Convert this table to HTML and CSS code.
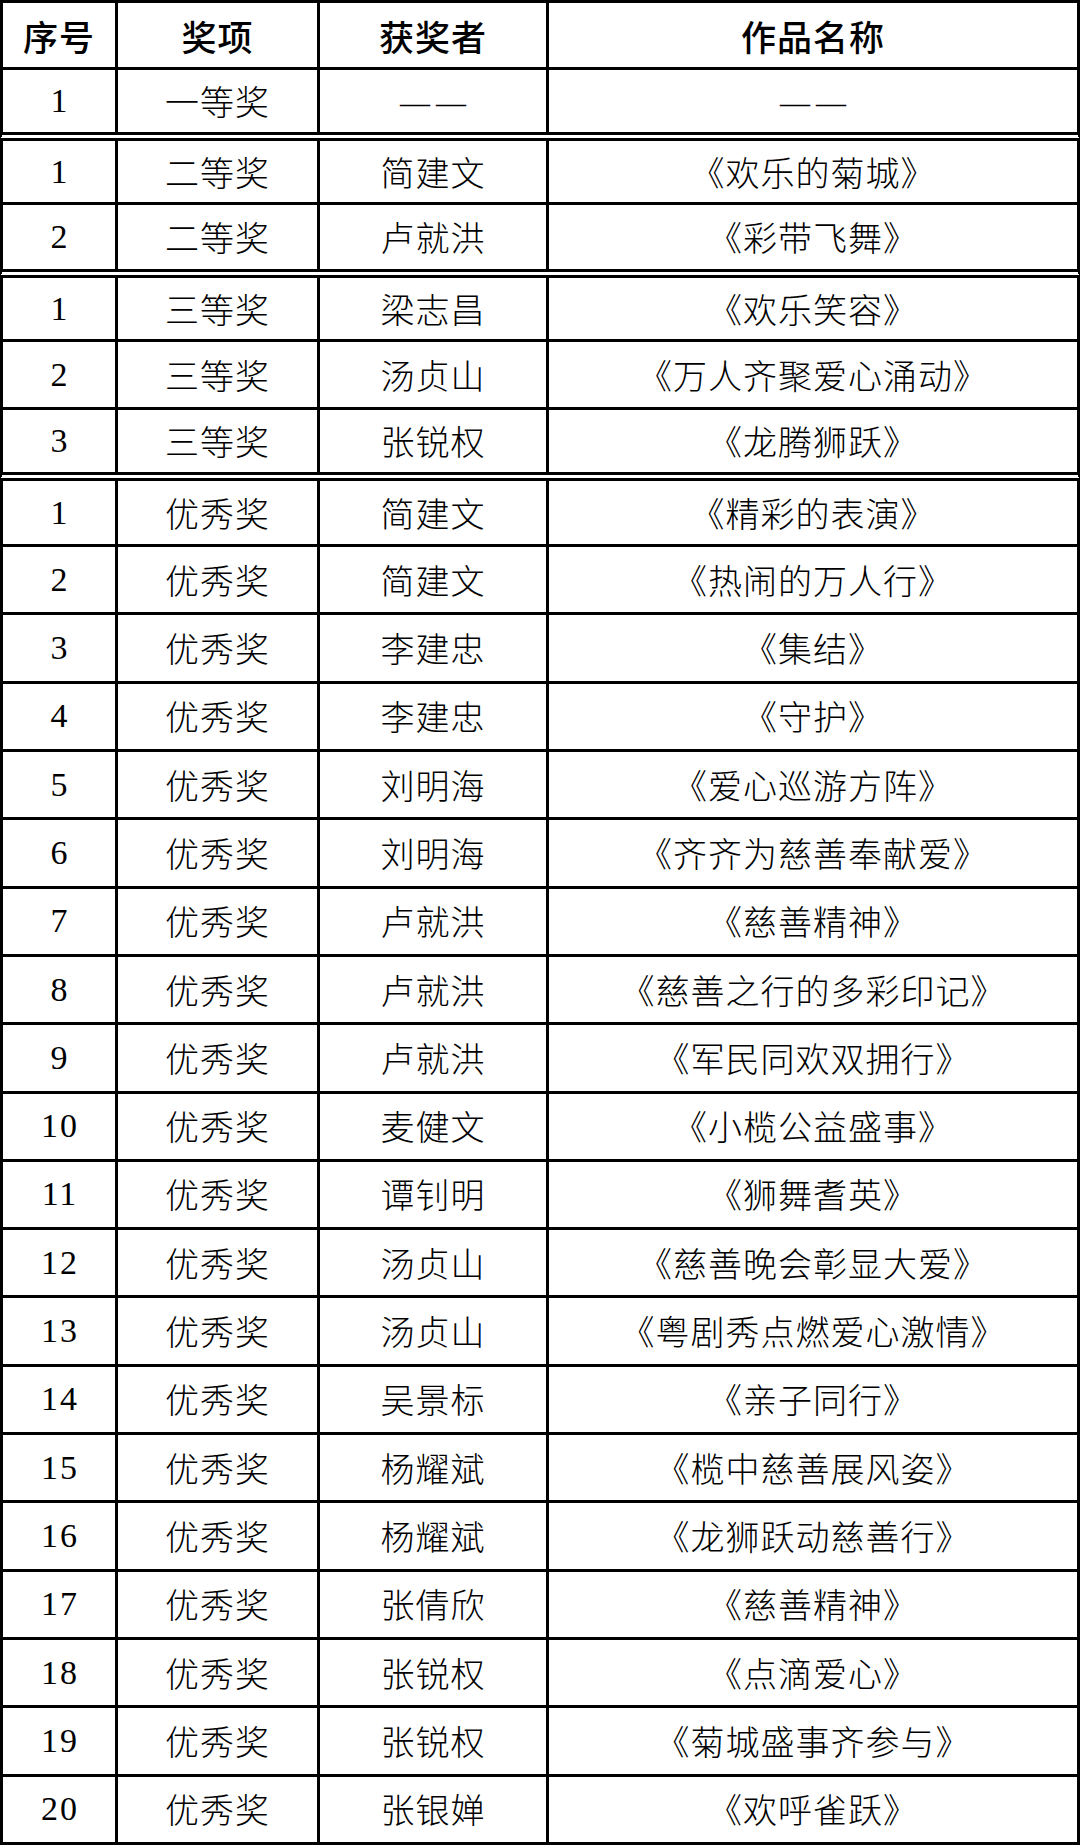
FILE: index.html
```html
<!DOCTYPE html>
<html lang="zh-CN">
<head>
<meta charset="utf-8">
<title>获奖名单</title>
<link rel="stylesheet" href="styles.css">
</head>
<body>
<div class="table">
  <div class="row head">
    <div class="c c1">序号</div><div class="c c2">奖项</div><div class="c c3">获奖者</div><div class="c c4">作品名称</div>
  </div>
  <div class="row h62 end">
    <div class="c c1 num">1</div><div class="c c2">一等奖</div><div class="c c3 dash"><span>—</span><span>—</span></div><div class="c c4 dash"><span>—</span><span>—</span></div>
  </div>
  <div class="row h61">
    <div class="c c1 num">1</div><div class="c c2">二等奖</div><div class="c c3">简建文</div><div class="c c4">《欢乐的菊城》</div>
  </div>
  <div class="row h64 end">
    <div class="c c1 num">2</div><div class="c c2">二等奖</div><div class="c c3">卢就洪</div><div class="c c4">《彩带飞舞》</div>
  </div>
  <div class="row h61">
    <div class="c c1 num">1</div><div class="c c2">三等奖</div><div class="c c3">梁志昌</div><div class="c c4">《欢乐笑容》</div>
  </div>
  <div class="row h65">
    <div class="c c1 num">2</div><div class="c c2">三等奖</div><div class="c c3">汤贞山</div><div class="c c4">《万人齐聚爱心涌动》</div>
  </div>
  <div class="row h62 end">
    <div class="c c1 num">3</div><div class="c c2">三等奖</div><div class="c c3">张锐权</div><div class="c c4">《龙腾狮跃》</div>
  </div>
  <div class="row h63">
    <div class="c c1 num">1</div><div class="c c2">优秀奖</div><div class="c c3">简建文</div><div class="c c4">《精彩的表演》</div>
  </div>
  <div class="row">
    <div class="c c1 num">2</div><div class="c c2">优秀奖</div><div class="c c3">简建文</div><div class="c c4">《热闹的万人行》</div>
  </div>
  <div class="row">
    <div class="c c1 num">3</div><div class="c c2">优秀奖</div><div class="c c3">李建忠</div><div class="c c4">《集结》</div>
  </div>
  <div class="row">
    <div class="c c1 num">4</div><div class="c c2">优秀奖</div><div class="c c3">李建忠</div><div class="c c4">《守护》</div>
  </div>
  <div class="row">
    <div class="c c1 num">5</div><div class="c c2">优秀奖</div><div class="c c3">刘明海</div><div class="c c4">《爱心巡游方阵》</div>
  </div>
  <div class="row">
    <div class="c c1 num">6</div><div class="c c2">优秀奖</div><div class="c c3">刘明海</div><div class="c c4">《齐齐为慈善奉献爱》</div>
  </div>
  <div class="row">
    <div class="c c1 num">7</div><div class="c c2">优秀奖</div><div class="c c3">卢就洪</div><div class="c c4">《慈善精神》</div>
  </div>
  <div class="row">
    <div class="c c1 num">8</div><div class="c c2">优秀奖</div><div class="c c3">卢就洪</div><div class="c c4">《慈善之行的多彩印记》</div>
  </div>
  <div class="row">
    <div class="c c1 num">9</div><div class="c c2">优秀奖</div><div class="c c3">卢就洪</div><div class="c c4">《军民同欢双拥行》</div>
  </div>
  <div class="row">
    <div class="c c1 num">10</div><div class="c c2">优秀奖</div><div class="c c3">麦健文</div><div class="c c4">《小榄公益盛事》</div>
  </div>
  <div class="row">
    <div class="c c1 num">11</div><div class="c c2">优秀奖</div><div class="c c3">谭钊明</div><div class="c c4">《狮舞耆英》</div>
  </div>
  <div class="row">
    <div class="c c1 num">12</div><div class="c c2">优秀奖</div><div class="c c3">汤贞山</div><div class="c c4">《慈善晚会彰显大爱》</div>
  </div>
  <div class="row">
    <div class="c c1 num">13</div><div class="c c2">优秀奖</div><div class="c c3">汤贞山</div><div class="c c4">《粤剧秀点燃爱心激情》</div>
  </div>
  <div class="row">
    <div class="c c1 num">14</div><div class="c c2">优秀奖</div><div class="c c3">吴景标</div><div class="c c4">《亲子同行》</div>
  </div>
  <div class="row">
    <div class="c c1 num">15</div><div class="c c2">优秀奖</div><div class="c c3">杨耀斌</div><div class="c c4">《榄中慈善展风姿》</div>
  </div>
  <div class="row">
    <div class="c c1 num">16</div><div class="c c2">优秀奖</div><div class="c c3">杨耀斌</div><div class="c c4">《龙狮跃动慈善行》</div>
  </div>
  <div class="row">
    <div class="c c1 num">17</div><div class="c c2">优秀奖</div><div class="c c3">张倩欣</div><div class="c c4">《慈善精神》</div>
  </div>
  <div class="row">
    <div class="c c1 num">18</div><div class="c c2">优秀奖</div><div class="c c3">张锐权</div><div class="c c4">《点滴爱心》</div>
  </div>
  <div class="row">
    <div class="c c1 num">19</div><div class="c c2">优秀奖</div><div class="c c3">张锐权</div><div class="c c4">《菊城盛事齐参与》</div>
  </div>
  <div class="row">
    <div class="c c1 num">20</div><div class="c c2">优秀奖</div><div class="c c3">张银婵</div><div class="c c4">《欢呼雀跃》</div>
  </div>
</div>
</body>
</html>
```
FILE: styles.css
```css
html, body {
  margin: 0;
  padding: 0;
  background: #fff;
}

.table {
  width: 1080px;
  border-top: 3px solid #000;
  color: #000;
  font-family: "Noto Sans CJK SC", sans-serif;
  font-weight: 300;
  font-size: 34px;
  letter-spacing: 1px;
}

.row {
  display: flex;
  height: 65.32px;
  border-left: 3px solid #000;
  border-right: 3px solid #000;
  border-bottom: 3px solid #000;
}

.row.end {
  border-bottom: 9px double #000;
}

.row.head {
  height: 64px;
  font-weight: 500;
  font-size: 35px;
}

.row.h61 { height: 61px; }
.row.h62 { height: 62px; }
.row.h63 { height: 63px; }
.row.h64 { height: 64px; }
.row.h65 { height: 65px; }

.c {
  box-sizing: border-box;
  display: flex;
  align-items: center;
  justify-content: center;
  white-space: nowrap;
  line-height: 1;
}

.c1 { flex: 0 0 115px; border-right: 3px solid #000; }
.c2 { flex: 0 0 202px; border-right: 3px solid #000; }
.c3 { flex: 0 0 229px; border-right: 3px solid #000; }
.c4 { flex: 1 1 auto; }

.num {
  font-family: "Liberation Serif", serif;
  font-weight: 400;
  font-size: 34px;
  letter-spacing: 2px;
  padding-left: 2px;
}

.dash {
  gap: 6px;
  font-family: "Liberation Serif", serif;
  font-size: 30px;
  letter-spacing: 0;
  padding-top: 4px;
}

.dash span {
  display: block;
}
```
